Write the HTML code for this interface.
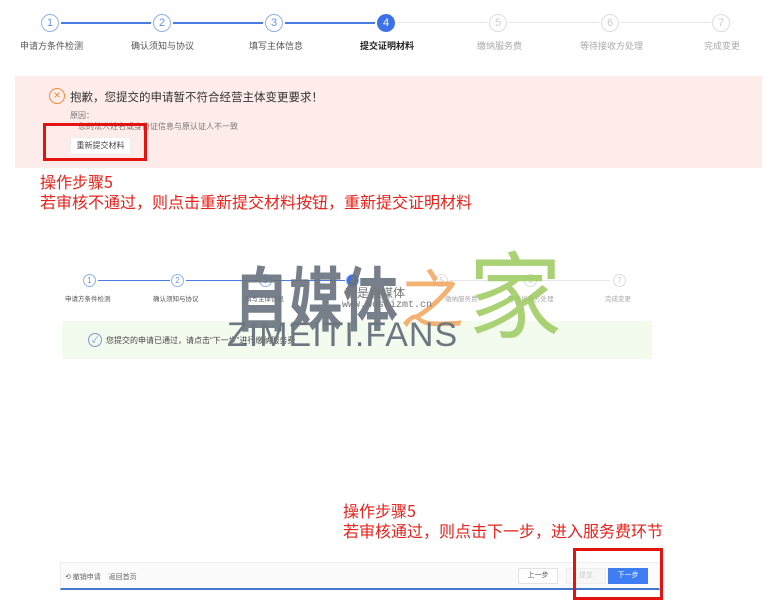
<!DOCTYPE html>
<html><head><meta charset="utf-8"><style>
*{margin:0;padding:0;box-sizing:border-box}
body{width:780px;height:597px;background:#fff;position:relative;overflow:hidden;font-family:"Liberation Sans","Noto Sans CJK SC",sans-serif}
.a{position:absolute;white-space:nowrap}
.c{position:absolute;border-radius:50%;border:1px solid #8fb0ee;color:#6d93e6;text-align:center;background:#fff}
.ln{position:absolute;height:2px;background:#4b7be0}
.lg{position:absolute;height:1px;background:#e6e6e6}
.red{color:#e8221c;font-family:"WenQuanYi Zen Hei","Noto Sans CJK SC",sans-serif}
</style></head><body>
<div class="ln" style="left:61px;top:22px;width:90px"></div>
<div class="ln" style="left:173px;top:22px;width:90px"></div>
<div class="ln" style="left:285px;top:22px;width:90px"></div>
<div class="lg" style="left:397px;top:22px;width:90px"></div>
<div class="lg" style="left:509px;top:22px;width:90px"></div>
<div class="lg" style="left:621px;top:22px;width:90px"></div>
<div class="c" style="left:41px;top:14px;width:18px;height:18px;font-size:11px;line-height:16px">1</div>
<div class="c" style="left:153px;top:14px;width:18px;height:18px;font-size:11px;line-height:16px">2</div>
<div class="c" style="left:265px;top:14px;width:18px;height:18px;font-size:11px;line-height:16px">3</div>
<div class="c" style="left:377px;top:14px;width:18px;height:18px;font-size:11px;line-height:16px;background:#3d72e6;border-color:#3d72e6;color:#fff">4</div>
<div class="c" style="left:489px;top:14px;width:18px;height:18px;font-size:11px;line-height:16px;border-color:#ddd;color:#ccc">5</div>
<div class="c" style="left:601px;top:14px;width:18px;height:18px;font-size:11px;line-height:16px;border-color:#ddd;color:#ccc">6</div>
<div class="c" style="left:712px;top:14px;width:18px;height:18px;font-size:11px;line-height:16px;border-color:#ddd;color:#ccc">7</div>
<div class="a" style="left:20px;top:39px;font-size:9px;color:#555">申请方条件检测</div>
<div class="a" style="left:131px;top:39px;font-size:9px;color:#555">确认须知与协议</div>
<div class="a" style="left:249px;top:39px;font-size:9px;color:#555">填写主体信息</div>
<div class="a" style="left:360px;top:39px;font-size:9px;color:#222;font-weight:bold">提交证明材料</div>
<div class="a" style="left:477px;top:39px;font-size:9px;color:#aaa">缴纳服务费</div>
<div class="a" style="left:580px;top:39px;font-size:9px;color:#aaa">等待接收方处理</div>
<div class="a" style="left:704px;top:39px;font-size:9px;color:#aaa">完成变更</div>
<div class="a" style="left:15px;top:76px;width:747px;height:92px;background:#fdecea"></div>
<div class="a" style="left:49px;top:88px;width:16px;height:16px;border:1.5px solid #f08a2c;border-radius:50%;color:#f08a2c;font-size:12px;line-height:12px;text-align:center">×</div>
<div class="a" style="left:70px;top:89px;font-size:11.5px;color:#333">抱歉，您提交的申请暂不符合经营主体变更要求！</div>
<div class="a" style="left:70px;top:110px;font-size:8px;color:#777">原因：</div>
<div class="a" style="left:78px;top:121px;font-size:8px;color:#777">您的法人姓名或身份证信息与原认证人不一致</div>
<div class="a" style="left:70px;top:137px;width:61px;height:18px;background:#fff;border:1px solid #eee;font-size:8px;line-height:16px;text-align:center;color:#444">重新提交材料</div>
<div class="a" style="left:43px;top:123px;width:104px;height:38px;border:3px solid #e3130f"></div>
<div class="a red" style="left:40px;top:171px;font-size:16px;line-height:20px">操作步骤5<br>若审核不通过，则点击重新提交材料按钮，重新提交证明材料</div>
<div class="ln" style="left:98px;top:280px;width:72px;height:1px"></div>
<div class="ln" style="left:186px;top:280px;width:72px;height:1px"></div>
<div class="ln" style="left:273px;top:280px;width:72px;height:1px"></div>
<div class="lg" style="left:449px;top:280px;width:72px"></div>
<div class="lg" style="left:538px;top:280px;width:72px"></div>
<div class="c" style="left:83px;top:274px;width:13px;height:13px;font-size:8px;line-height:11px">1</div>
<div class="c" style="left:171px;top:274px;width:13px;height:13px;font-size:8px;line-height:11px">2</div>
<div class="c" style="left:259px;top:274px;width:13px;height:13px;font-size:8px;line-height:11px">3</div>
<div class="c" style="left:346px;top:274px;width:13px;height:13px;font-size:8px;line-height:11px;background:#3d72e6;color:#fff">4</div>
<div class="c" style="left:435px;top:274px;width:13px;height:13px;font-size:8px;line-height:11px;border-color:#ddd;color:#ccc">5</div>
<div class="c" style="left:524px;top:274px;width:13px;height:13px;font-size:8px;line-height:11px;border-color:#ddd;color:#ccc">6</div>
<div class="c" style="left:613px;top:274px;width:13px;height:13px;font-size:8px;line-height:11px;border-color:#ddd;color:#ccc">7</div>
<div class="a" style="left:65px;top:293px;font-size:6.5px;color:#555">申请方条件检测</div>
<div class="a" style="left:153px;top:293px;font-size:6.5px;color:#555">确认须知与协议</div>
<div class="a" style="left:245px;top:293px;font-size:6.5px;color:#555">填写主体信息</div>
<div class="a" style="left:445px;top:293px;font-size:6.5px;color:#aaa">缴纳服务费</div>
<div class="a" style="left:508px;top:293px;font-size:6.5px;color:#aaa">等待接收方处理</div>
<div class="a" style="left:605px;top:293px;font-size:6.5px;color:#aaa">完成变更</div>
<div class="a" style="left:62px;top:321px;width:590px;height:38px;background:#f3fbef"></div>
<div class="a" style="left:88px;top:333px;width:14px;height:14px;border:1px solid #7b98d8;border-radius:50%;color:#7b98d8;font-size:9px;line-height:12px;text-align:center">✓</div>
<div class="a" style="left:106px;top:335px;font-size:8px;color:#444">您提交的申请已通过，请点击“下一步”进行缴纳服务费</div>
<div class="a" style="left:234px;top:256px;font-size:70px;line-height:80px;color:#69737e;font-weight:bold;opacity:.9;font-family:'Noto Sans CJK SC',sans-serif;transform:scaleX(.78);transform-origin:left top">自媒体</div>
<div class="a" style="left:400px;top:258px;font-size:64px;line-height:76px;color:#f2a45a;opacity:.85;font-family:'Noto Sans CJK SC',sans-serif">之</div>
<div class="a" style="left:468px;top:238px;font-size:94px;line-height:104px;color:#9ccb5e;opacity:.85;font-family:'Noto Sans CJK SC',sans-serif">家</div>
<div class="a" style="left:227px;top:316px;font-size:34px;line-height:38px;color:#6e7681;letter-spacing:1px">ZIMEITI.FANS</div>
<div class="a" style="left:345px;top:284px;font-size:12px;color:#777">我是自媒体</div>
<div class="a" style="left:342px;top:300px;font-size:10px;color:#777;font-family:'Liberation Mono',monospace">www.woshizmt.cn</div>
<div class="a red" style="left:343px;top:500px;font-size:16px;line-height:20px">操作步骤5<br>若审核通过，则点击下一步，进入服务费环节</div>
<div class="a" style="left:60px;top:562px;width:600px;height:28px;background:#fbfbfc;border:1px solid #eee;border-bottom:2px solid #3f7ad0"></div>
<div class="a" style="left:65px;top:572px;font-size:7px;color:#666">⟲ 撤销申请 &nbsp;&nbsp; 返回首页</div>
<div class="a" style="left:518px;top:568px;width:40px;height:16px;background:#fff;border:1px solid #e2e2e2;font-size:7px;line-height:14px;text-align:center;color:#555">上一步</div>
<div class="a" style="left:566px;top:568px;width:40px;height:16px;background:#f7f7f7;border:1px solid #eee;font-size:7px;line-height:14px;text-align:center;color:#ccc">提交</div>
<div class="a" style="left:608px;top:568px;width:40px;height:16px;background:#3e7ef2;font-size:7px;line-height:16px;text-align:center;color:#fff">下一步</div>
<div class="a" style="left:573px;top:548px;width:90px;height:52px;border:3px solid #e3130f"></div>
</body></html>
